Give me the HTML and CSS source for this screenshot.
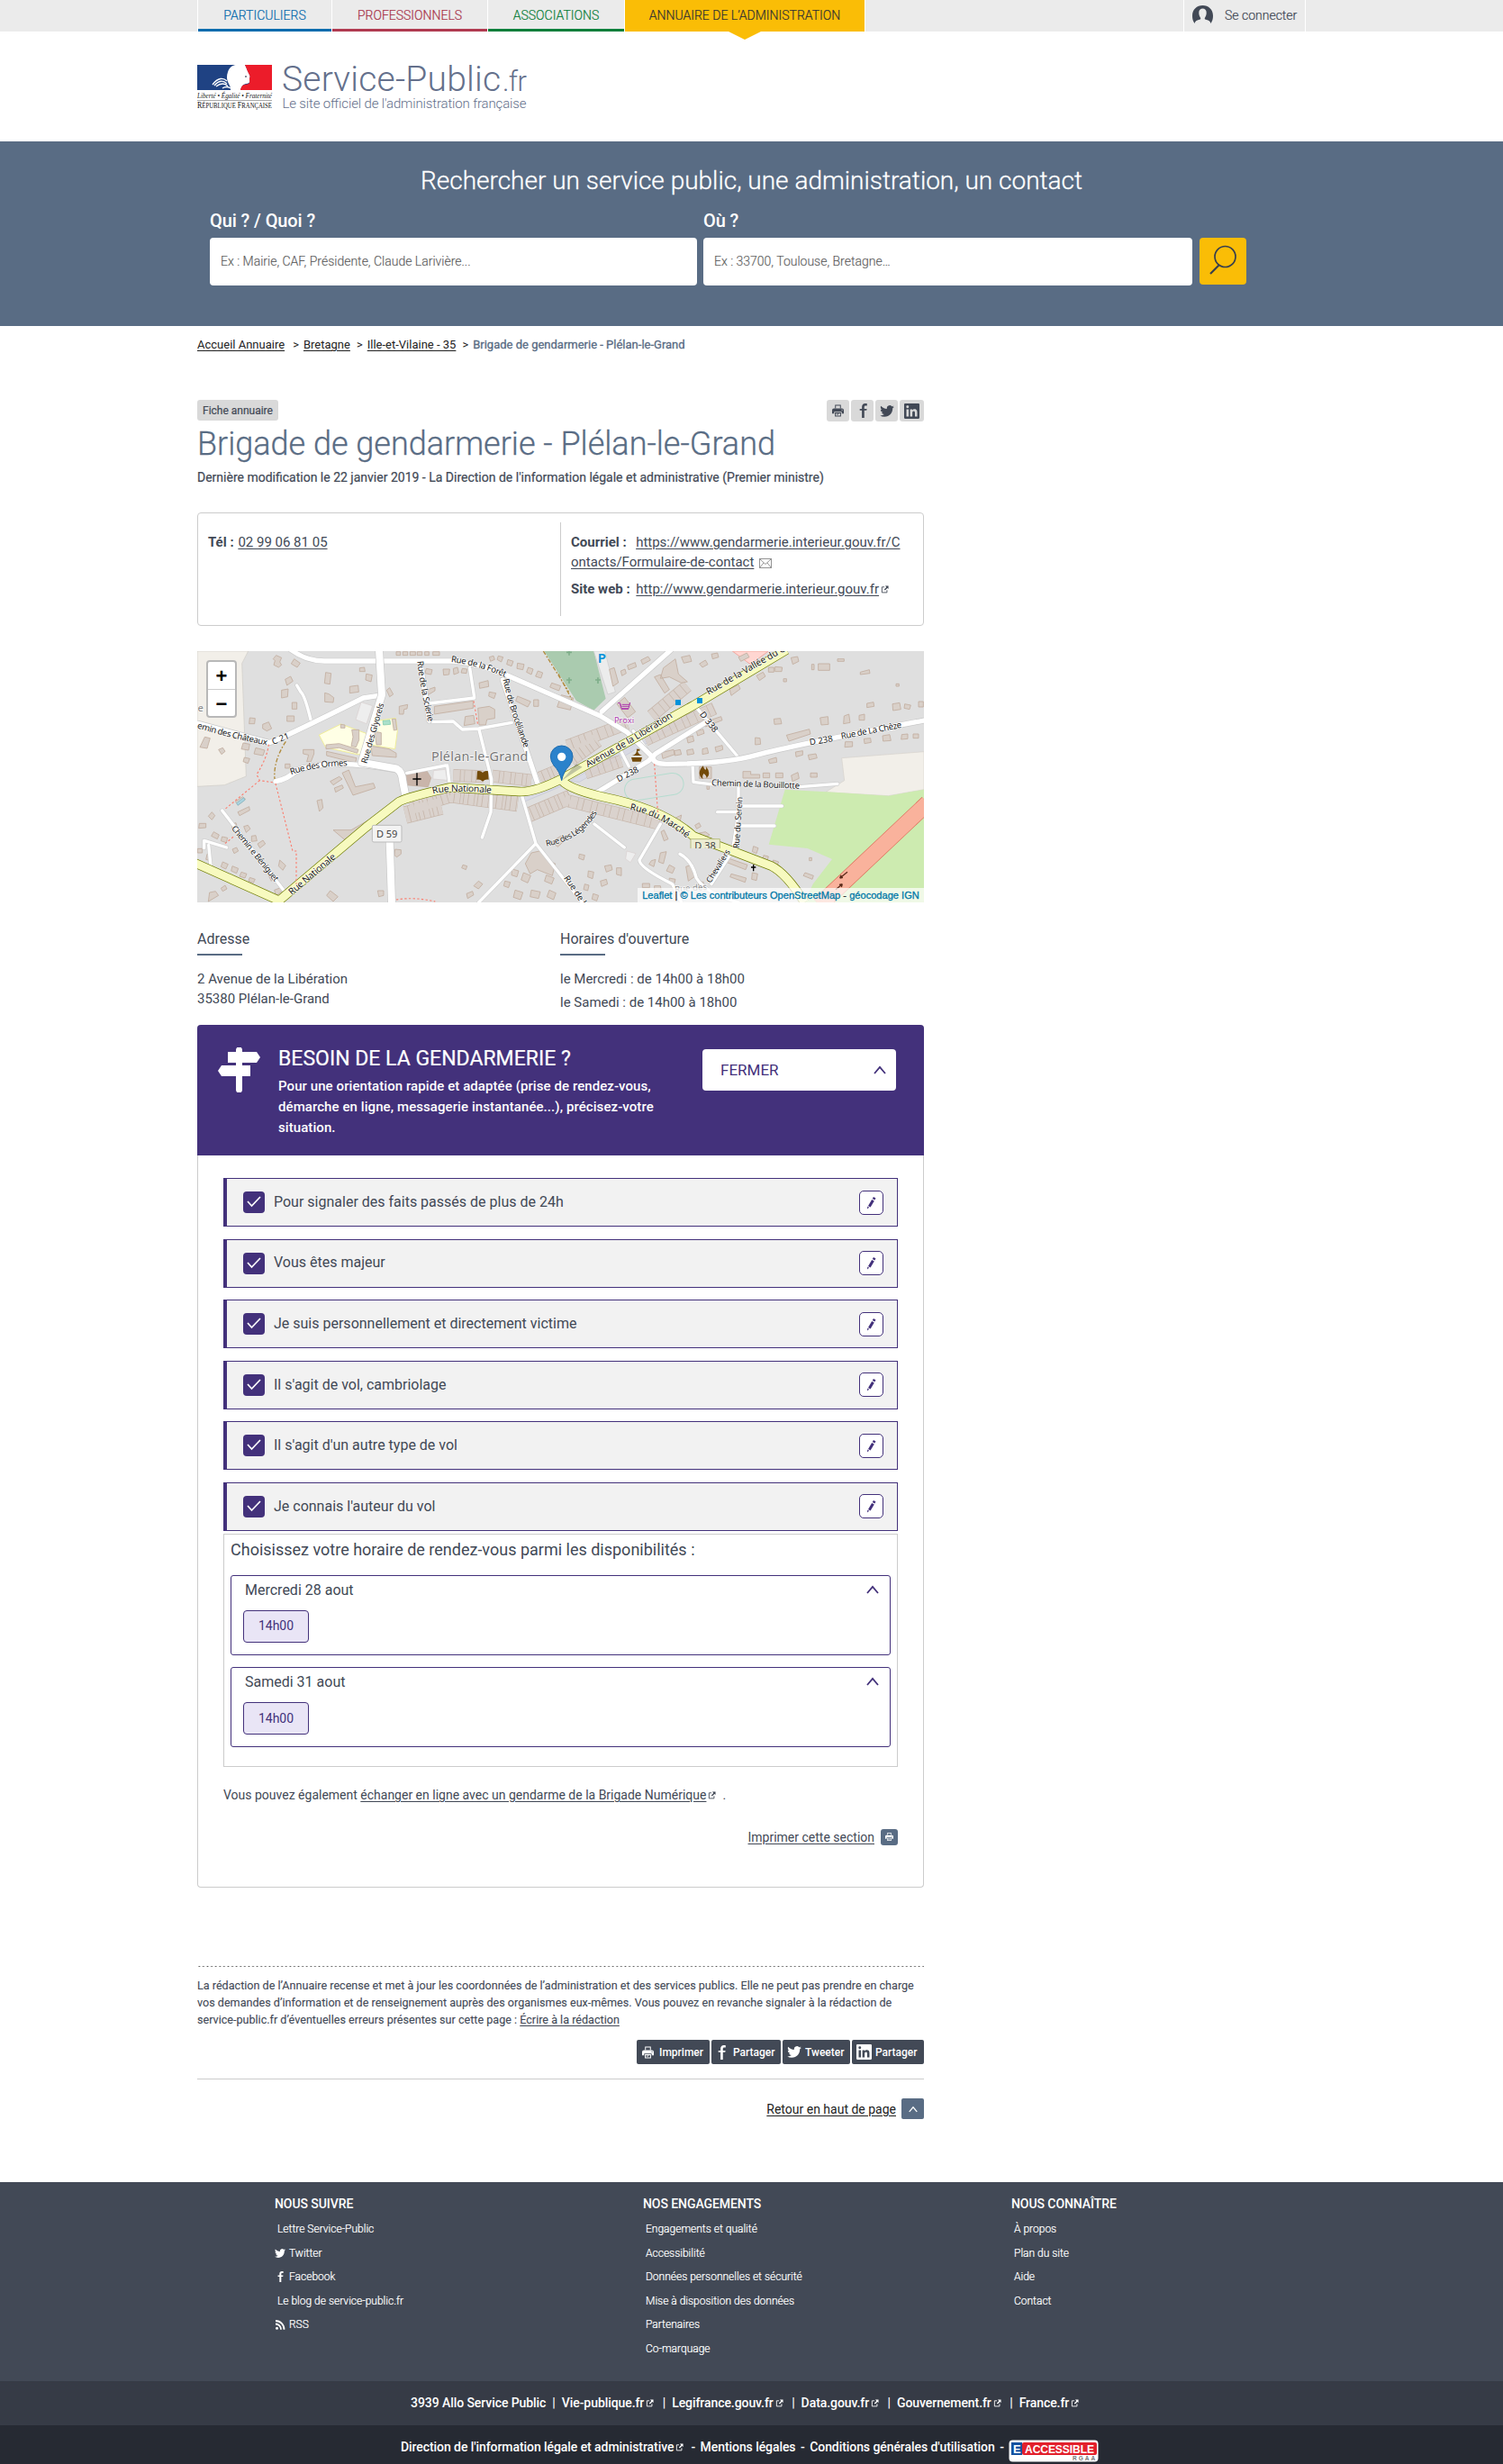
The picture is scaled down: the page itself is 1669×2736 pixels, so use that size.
FILE: index.html
```html
<!DOCTYPE html>
<html lang="fr">
<head>
<meta charset="utf-8">
<title>Brigade de gendarmerie - Plélan-le-Grand</title>
<link rel="stylesheet" href="styles.css">
</head>
<body>
<svg class="defs" width="0" height="0">
  <symbol id="print" viewBox="0 0 16 16"><path d="M4 0h8v4.500h-1.200V1.200H5.200V4.500H4zM2.500 5h11A2.500 2.500 0 0 1 16 7.500V12h-2.800V9.500H2.800V12H0V7.500A2.500 2.500 0 0 1 2.500 5zM13 6.500v1.300h1.300V6.500z" fill-rule="evenodd"/><path d="M3.800 10.500h8.400V16H3.800zM5 11.700v3.100h6v-3.100z" fill-rule="evenodd"/><path d="M5.800 12.300h4v.7h-4zM5.800 13.600h2.600v.7H5.800z"/></symbol>
  <symbol id="fb" viewBox="0 0 12 20"><path d="M12 .2v3h-1.900c-1.500 0-1.900.7-1.900 1.700v2.500h3.600l-.5 2.400H8.200V20H4.900V9.800h-3V7.400h3V4.700C4.900 1.700 6.700 0 9.400 0 10.700 0 12 .2 12 .2z"/></symbol>
  <symbol id="tw" viewBox="0 2 24 20"><path d="M23.954 4.569a10 10 0 0 1-2.825.775 4.958 4.958 0 0 0 2.163-2.723c-.951.555-2.005.959-3.127 1.184a4.920 4.920 0 0 0-8.384 4.482C7.691 8.094 4.066 6.130 1.640 3.161a4.822 4.822 0 0 0-.666 2.475c0 1.710.870 3.213 2.188 4.096a4.904 4.904 0 0 1-2.228-.616v.061a4.923 4.923 0 0 0 3.946 4.827 4.996 4.996 0 0 1-2.212.085 4.937 4.937 0 0 0 4.604 3.417 9.868 9.868 0 0 1-6.102 2.105c-.390 0-.779-.023-1.170-.067a13.995 13.995 0 0 0 7.557 2.209c9.054 0 13.999-7.496 13.999-13.986 0-.209 0-.420-.015-.630a9.936 9.936 0 0 0 2.460-2.548z"/></symbol>
  <symbol id="li" viewBox="0 0 24 24"><path d="M20.447 20.452h-3.554v-5.569c0-1.328-.027-3.037-1.852-3.037-1.853 0-2.136 1.445-2.136 2.939v5.667H9.351V9h3.414v1.561h.046c.477-.9 1.637-1.850 3.370-1.850 3.601 0 4.267 2.370 4.267 5.455v6.286zM5.337 7.433a2.062 2.062 0 0 1-2.063-2.065 2.064 2.064 0 1 1 2.063 2.065zm1.782 13.019H3.555V9h3.564v11.452zM22.225 0H1.771C.792 0 0 .774 0 1.729v20.542C0 23.227.792 24 1.771 24h20.451C23.200 24 24 23.227 24 22.271V1.729C24 .774 23.200 0 22.222 0z"/></symbol>
  <symbol id="ext" viewBox="0 0 10 10"><path d="M4.500 2H1.500v6.800H7.700V5.800" fill="none" stroke="currentColor"/><path d="M5.500.5H9.500v4L8.200 3.200 5.300 6.100 4.300 5.100 7 2.100z"/></symbol>
  <symbol id="check" viewBox="0 0 24 24"><path d="M5 11l4.500 5L19 6" fill="none" stroke="#fff" stroke-width="1.700"/></symbol>
  <symbol id="pen" viewBox="0 0 28 28"><path d="M16.800 6.700l2.800 1.700-1.300 2.300-2.900-1.700zM14.700 10l3 1.800-4.700 7.900-2.900-1.700zM9.300 18.600l2 1.200-2.300 2z"/></symbol>
  <symbol id="up" viewBox="0 0 14 10"><path d="M1 9l6-7 6 7" fill="none" stroke="currentColor" stroke-width="1.800"/></symbol>
</svg>

<header>
  <nav class="top"><div class="wrap topin">
    <a class="tab t1">PARTICULIERS</a><a class="tab t2">PROFESSIONNELS</a><a class="tab t3">ASSOCIATIONS</a><a class="tab t4">ANNUAIRE DE L’ADMINISTRATION</a>
    <a class="login"><svg width="23" height="20" viewBox="0 0 23 20"><path d="M2.500 20C.8 17.500 0 15 0 11.500 0 4.500 5 0 11.500 0S23 4.500 23 11.500c0 3.500-.8 6-2.500 8.500-.8-2.500-2.500-3.700-6.200-4.500-.6-.2-.7-.8-.4-1.400C15 12 15.700 10.500 15.700 8c0-2.800-1.700-4.500-4.200-4.500S7.300 5.200 7.300 8c0 2.500.7 4 1.800 6.100.3.600.2 1.200-.4 1.400C5 16.300 3.300 17.500 2.500 20z" fill="#424956"/></svg><span>Se connecter</span></a>
  </div></nav>
  <div class="wrap brand">
    <svg width="366" height="56" viewBox="0 0 366 56">
      <rect width="83" height="28" fill="#1f4283"/><path d="M34 8C36 2 40 0 44 0H53c2 4 3 7 5.500 12 .8 2-.8 2.500-.3 4.500.8 3-.5 4-4.200 4.500C50 22 49 25 48 28H37C38 24 33 20 33 14c0-2 .2-4 1-6z" fill="#fff"/><path d="M53 0H83V28H48c1-4 2-5.500 5-6 4-.5 6-1 5-5.500-.4-2 1-2.500.4-4.500C55.500 7 55 4 53 0z" fill="#ec1c2a"/>
      <path d="M17 22c6-8 12-8 16-4M19 23c5-6 10-6 14-2M21 24c5-4 9-4 13-.5M28 26c3-2 6-2 9 0" fill="none" stroke="#fff" stroke-width="1.300"/><circle cx="54" cy="13" r="1" fill="#667"/>
      <text class="lef" x="0" y="36.500" textLength="83" lengthAdjust="spacingAndGlyphs">Liberté • Égalité • Fraternité</text>
      <path d="M0 39.500H83" stroke="#aaa"/>
      <text class="rf" x="0" y="48" textLength="83" lengthAdjust="spacingAndGlyphs">R<tspan class="sc">ÉPUBLIQUE</tspan> F<tspan class="sc">RANÇAISE</tspan></text>
      <text class="sp" x="94" y="28.500" textLength="243">Service-Public</text><text class="spf" x="339" y="28.500" textLength="27">.fr</text>
      <text class="tag" x="94.500" y="48" textLength="271">Le site officiel de l'administration française</text>
    </svg>
  </div>
</header>

<section class="search">
  <h2>Rechercher un service public, une administration, un contact</h2>
  <div class="fields">
    <div class="field"><label>Qui ? / Quoi ?</label><div class="input">Ex : Mairie, CAF, Présidente, Claude Larivière...</div></div>
    <div class="field f2"><label>Où ?</label><div class="input">Ex : 33700, Toulouse, Bretagne…</div></div>
    <div class="go"><svg width="52" height="52" viewBox="0 0 52 52"><circle cx="28.500" cy="21" r="11.500" fill="none" stroke="#383f4d" stroke-width="1.700"/><path d="M22 30L12 40" stroke="#383f4d" stroke-width="2.200"/></svg></div>
  </div>
</section>

<main class="wrap">
  <nav class="crumb"><a>Accueil Annuaire</a><i class="first">&gt;</i><a>Bretagne</a><i>&gt;</i><a>Ille-et-Vilaine - 35</a><i>&gt;</i><b>Brigade de gendarmerie - Plélan-le-Grand</b></nav>
  <div class="content">
    <div class="meta"><span class="badge">Fiche annuaire</span>
      <div class="share"><span><svg width="13" height="14"><use href="#print"/></svg></span><span><svg width="10" height="16"><use href="#fb"/></svg></span><span><svg width="16" height="13"><use href="#tw"/></svg></span><span class="w"><svg width="17" height="17"><use href="#li"/></svg></span></div></div>
    <h1>Brigade de gendarmerie - Plélan-le-Grand</h1>
    <p class="mod">Dernière modification le 22 janvier 2019 - La Direction de l'information légale et administrative (Premier ministre)</p>

    <div class="contact">
      <div class="c1"><p><b>Tél : </b><a class="m1">02 99 06 81 05</a></p></div>
      <div class="c2"><p><b>Courriel : </b>&nbsp;<a class="m2">https://www.gendarmerie.interieur.gouv.fr/C</a><br><a>ontacts/Formulaire-de-contact</a> <svg class="mail" width="14" height="11" viewBox="0 0 14 11"><path d="M.5.500h13v10H.5zL7 6.500 13.500.5M.5 10.500L5 5M13.500 10.500L9 5" fill="none" stroke="#777" stroke-width=".8"/></svg></p>
      <p><b>Site web : </b><a class="m2">http://www.gendarmerie.interieur.gouv.fr</a><svg class="ext"><use href="#ext"/></svg></p></div>
    </div>

    <div class="map">
<svg width="807" height="279" viewBox="27 24 2421 837">
 <rect x="27" y="24" width="2421" height="837" fill="#dfdfdf"/>
 <path d="M27 24H197L176 65 190 441 118 470 27 475z" fill="#f2efe9" stroke="#cfcbc5" stroke-width="2"/>
 <path d="M433 303L506 267 595 300 625 256 688 247 694 290 686 350 610 337 600 370 560 368 455 345z" fill="#ffffe5" stroke="#f0ee9a" stroke-width="3"/>
 <path d="M1183 24H1348L1388 182 1348 221 1290 190z" fill="#aacbaf"/>
 <path d="M1348 24H1385L1420 160 1395 168z" fill="#ececec" stroke="#ccc" stroke-width="2"/>
 <path d="M2174 380L2448 359V485L2330 506 2120 494 2183 455z" fill="#f2efe9" stroke="#d6d2cc" stroke-width="2"/>
 <path d="M1985 485L2150 494 2330 506 2448 485V861H2050L2078 800 2142 717 2060 681 1931 668z" fill="#cdebb0"/>
 <path d="M1810 24H1930L1870 68z" fill="#ffd6d1" stroke="#f2a8a0" stroke-width="3"/>
 <path d="M1115 500L1250 440V470L1118 525zM1270 457L1680 215 1690 235 1300 460z" fill="#d9dae4" stroke="#c3c5d4" stroke-width="2"/>
 <!-- rows of terraced houses -->
 <g fill="none" opacity=".8">
  <g stroke="#c2ad9f">
   <path d="M735 540L870 500 1095 530M720 570L840 540" stroke-width="58"/>
   <path d="M880 438L980 442M1010 440L1140 455" stroke-width="42"/>
   <path d="M1130 570L1270 510M1270 385L1360 320M1170 450L1230 425" stroke-width="50"/>
   <path d="M1260 340L1460 265M1320 430L1440 390M1520 320L1750 215M1250 520L1570 600M1540 240L1660 140" stroke-width="42"/>
  </g>
  <g stroke="#d9d0c9">
   <path d="M735 540L870 500 1095 530M720 570L840 540" stroke-width="54" stroke-dasharray="13 2.500 18 2 9 2.500"/>
   <path d="M880 438L980 442M1010 440L1140 455" stroke-width="38" stroke-dasharray="22 2.500 12 2"/>
   <path d="M1130 570L1270 510M1270 385L1360 320M1170 450L1230 425" stroke-width="46" stroke-dasharray="11 2.500 19 2"/>
   <path d="M1260 340L1460 265M1320 430L1440 390M1520 320L1750 215M1250 520L1570 600M1540 240L1660 140" stroke-width="38" stroke-dasharray="17 2.500 25 2"/>
  </g>
 </g>
 <!-- detached buildings -->
 <g fill="#d9d0c9" stroke="#c2ad9f" stroke-width="2.500">
  <path d="M290 38l18 8-6 14 6 10-10 8-16-8 4-14-6-6zM350 50l20 14-10 14-20-12zM455 95l18 3-4 36-18-3zM535 142l28-4 2 22-30 4zM452 163l14 4 16 12-2 16-28-2zM568 80l16-2 2 14h-18zM590 100l20 4-4 22-18-6zM320 118l18-10 8 16-20 14zM308 154l22-4-2 26-20 4zM343 195h16v22h-16zM326 240h24v18h-24zM202 246l18 2-2 18h-18zM245 268l20-8 10 22-16 8-14-8zM180 330l22 4-4 20-24-4zM222 346l30 8-6 18-30-6zM184 378l18 4-6 16-16-6zM52 310l18 4-10 34-24-4zM98 352l14-6 8 12-12 10zM668 146l12 22-12 8-10-22zM700 208l28-6-2 14-10 2-2 16h-14zM785 156l34-12v12l-20 12h-14zM320 400h16v14h-16zM380 352h36v14l-10 26h-14l6-22-18-4z"/>
  <path d="M690 26h14v12h-14zM712 26h16v12h-16zM736 26h18v12h-18zM760 26h16v12h-16zM785 26h14v12h-14zM812 26h22v12h-22zM790 82l20 4-4 16-20-4zM846 84h22l-2 18-18 2zM880 82l14-4 4 18-16 6zM910 82l16 2-2 14-18-2zM817 208L946 190 946 214 817 234zM920 242l28-4 4 28-36 6zM962 214l38-6 18 10v30l-26 4-4 18h-22zM1000 44l14-4 4 12-14 6zM1030 40l16 4-6 16-14-8zM1062 52l18 6-6 16-16-6zM1094 64l22 4-4 18-20-4zM1130 78l16 6-6 18-16-8zM966 130l30-8 2 20-30 6zM1000 160l22 4-6 18-18-8zM1046 120l20 6-6 18-18-6zM1094 174l44 18-10 18-40-20zM1148 186h16v22h-16zM1162 90l16 6-6 18-18-6zM1208 130l30 10-6 16-30-12zM1240 170l40 10-10 40-44-10z"/>
  <path d="M505 268l14 2v10h-14zM542 286h24v34l-10 24-16-4 6-30zM618 292l22 4v40h-16zM456 336l44-4 64 20-4 12-60-18-44 4zM458 358l100 22-4 16-96-24zM606 340l60 10 24 14v14l-80-6zM676 250h12l4 36-10 2zM470 458l30-16 10 8-30 20zM484 480l26-10 4 10-26 14zM510 430l22-10 22 56 60-12 6 16-74 24zM480 620h60l80-46 8 12-70 44-26 34zM426 522l16-4 4 28-12 12zM162 560l38-18 2 12-34 18zM154 525l24-16 10 8-24 20zM64 574l12-14 10 12-10 14zM34 598h22v14l-24 2zM82 626l18 10-6 14-20-10zM110 642l18 4-4 16-18-6zM142 600l14-4 4 14-16 8zM182 608l14-4 8 12-14 12zM208 640l14-2 4 18-18 2zM228 666l18-12 8 12-18 14z"/>
  <path d="M112 726l18 8-8 16-16-8zM144 740l20 8-6 16-18-8zM174 760l18 6-6 14-18-6zM202 778l18 6-6 12-16-6zM28 682h16v14H28zM60 700l14 4-4 18-14-4zM144 684l14-6 6 12-14 8zM302 720l20 18-10 16-14-14zM264 770l16-6 8 12-14 14zM284 820l26-10 4 10-24 20zM106 814l14-10 6 12-14 8zM68 828l20-4 10 14-34 20zM470 822l26 20-16 16-22-20zM628 822h20v16l-16 4zM686 684l20 2v14l-14 10-8-6zM964 790l14 10-14 16-16-10zM912 736l14 4-4 12-14-6zM924 832l20-8 4 12-20 12zM1140 696l36-8 16 30 28 14-10 40-50-20-24 14-16-34zM1076 750l22 6-6 20-18-6zM1114 762l24 10-10 24-22-10zM1052 790l18 4-6 18-16-6zM1086 820l26 8-8 24-24-8zM1140 820l30 6-6 22-28-6zM1190 770l26 10-8 20-24-10zM1208 660l30-20 16 12-26 24zM1200 820l22 10-8 22-22-10z"/>
  <path d="M1438 90l14-6 4 14-14 8zM1460 72l26-10 4 14-26 10zM1505 54l24-12 8 12-26 14zM1400 85l16-6 14 50-18 12zM1580 80l40-30 10 50 30 26-20 4-40-20-30 5zM1550 110l20-8 30 50-16 12zM1425 200l26-22 36 48-26 20zM1640 44l28-6 6 20-26 6zM1700 66l20-12 8 14-18 10zM1740 34l20-4 4 14-20 6zM1830 44l28-14 8 14-28 14zM1890 106l22-12 8 14-20 14zM1930 78h18v16h-18zM1952 76l24 2-2 14h-22zM2005 46l22-4 4 16-20 10zM2074 68h8v18h-8zM2096 66h38v22h-38zM2160 50h22v8h-22zM2236 94l30-8 2 12-32 4zM1980 116h10v10h-10zM1800 150l30-14 6 14-30 22zM2355 133h10v8h-10zM2258 198l22-4 2 14-24 4zM2343 200l24-4 4 22-26 4zM2384 200l20 4-4 14-18-4zM2430 192h16v18h-16zM1948 250l22-2 4 18-24 2zM2102 246l26-4 2 26-24 2zM2182 240l16-6 4 28-22 4zM2232 238l18-4v20h-18z"/>
  <path d="M1990 304l76-20 4 16-72 24zM1886 312l16 2 2 20-18 2zM1658 312l20-6 4 18-20 6zM1690 290l22-6 4 14-22 8zM1712 262l60-20 4 12-56 22zM1574 362l40-10 4 16-40 14zM1616 356l20-4 4 16-22 4zM1658 354l20-4 4 16-22 4zM1710 350l16-4 4 18-20 4zM1752 344l24-6 2 14-22 8zM1930 386l26-8 2 16-24 4zM2020 360l24-4v14l-22 6zM2062 370l26-4 4 14-26 6zM2186 326h24v16l-26 2zM2248 316l22-2 2 14-22 4zM2310 306l24-4 4 20-26 2zM2374 302l20-2v16l-22 2zM2412 300h18v14h-18zM1845 425h26v10h30v12h-56zM1912 430h22v16h-22zM1954 430h24v16h-24zM2006 438l22-10 4 20-22 10zM2070 430h22v14h-22zM1700 410h40v38h-40zM1725 466h8v18h-8zM1685 604l14-8 6 12-14 8zM1700 630l20-4 14 10-14 8zM1620 580l20-10-10 50-14-6zM1582 620l14 30-14 6-10-30z"/>
  <path d="M1570 696l20-4-10 40-16-6zM1540 722l14-4-6 24-16-8zM1600 736l18 10-8 18-20-8zM1600 780l20 4-4 16-18-4zM1510 798h24v14h-24zM1550 806h20l4 20h-24zM1655 742l20-6 8 40-20 14zM1424 746h16v26l-16-4zM1700 790l14 4-4 14-14-4zM1796 714l64 22-6 16-62-24zM1806 766l50 14-4 14-50-18zM1880 674l16 6-6 18-14-6zM1914 704l16 4-4 14-16-4zM1946 720l18 6-6 14-16-4zM1876 762l18 4-4 22-16-4zM2052 762l28 10-4 12-30-12zM2066 712h8v10h-8zM1330 756l18 4-4 22-16-6zM1384 740l22-4 4 16-20 8zM1370 790l20-6 4 16-20 8zM1318 800l14 4-4 18-14-4zM1346 832l18 6-6 18-16-6zM1300 700l18 4-4 16-16-6z"/>
  <path d="M715 430L790 420 806 446 796 476 722 470z" fill="#c9b5aa"/>
 </g>
 <path d="M645 256l24-2 2 14-24 2z" fill="#aae0cb" stroke="#77c5a5" stroke-width="2"/><path d="M158 530l24-18 4 8-24 18z" fill="#aad3df" stroke="#7ab5c5" stroke-width="2"/>
 <path d="M573 194l38 12-20 60-36-14zM814 422l40-4 6 36-48-4zM1458 690l30 8-18 30-16-12z" fill="#eee" stroke="#d8cfcf" stroke-width="2"/>
 <rect x="1450" y="440" width="198" height="72" rx="36" transform="rotate(-9 1550 476)" fill="none" stroke="#b5dccf" stroke-width="3"/>
 <!-- streets -->
 <g fill="none" stroke-linecap="round" stroke-linejoin="round">
  <g stroke="#cfcfcf" stroke-width="14">
   <path d="M359 138L372 160Q385 170 405 252M800 198L950 180M810 260L880 258 910 285 965 282 1075 262M880 258L895 272M935 80L950 178M965 282L1007 450 1005 560 976 645M860 405L868 470M725 430L855 405M110 555L330 840M50 680V655L125 678M65 670L72 740M1677 400L1680 460 1760 470M2035 476L2160 466M1435 350L1465 408M1480 290L1545 380M1840 540H1975M1760 560H1830M1840 606H1950"/>
   <path d="M1107 500L1155 665 965 861M1155 665L1310 861M1350 600L1450 678M1570 600L1500 720Q1500 745 1610 800L1640 861M1635 700Q1675 720 1690 780 1720 830 1830 861M1830 480V560L1810 690 1740 800M1680 200L1830 378"/>
  </g>
  <g stroke="#fff" stroke-width="10">
   <path d="M359 138L372 160Q385 170 405 252M800 198L950 180M810 260L880 258 910 285 965 282 1075 262M880 258L895 272M935 80L950 178M965 282L1007 450 1005 560 976 645M860 405L868 470M725 430L855 405M110 555L330 840M50 680V655L125 678M65 670L72 740M1677 400L1680 460 1760 470M2035 476L2160 466M1435 350L1465 408M1480 290L1545 380M1840 540H1975M1760 560H1830M1840 606H1950"/>
   <path d="M1107 500L1155 665 965 861M1155 665L1310 861M1350 600L1450 678M1570 600L1500 720Q1500 745 1610 800L1640 861M1635 700Q1675 720 1690 780 1720 830 1830 861M1830 480V560L1810 690 1740 800M1680 200L1830 378"/>
  </g>
  <path d="M340 20Q390 57 450 57H870Q960 60 1060 105L1370 240 1460 295 1545 378M1045 120L1162 468M770 60L800 255M270 328Q320 310 580 180L632 172M288 458Q330 450 360 420 480 380 690 420M1375 225L1605 20M1350 500L1530 390 1555 365 1720 262M1545 378Q1545 400 1590 400 1780 400 1890 370T2448 255M30 265L265 328" stroke="#c9c9c9" stroke-width="20"/>
  <path d="M340 20Q390 57 450 57H870Q960 60 1060 105L1370 240 1460 295 1545 378M1045 120L1162 468M770 60L800 255M270 328Q320 310 580 180L632 172M288 458Q330 450 360 420 480 380 690 420M1375 225L1605 20M1350 500L1530 390 1555 365 1720 262M1545 378Q1545 400 1590 400 1780 400 1890 370T2448 255M30 265L265 328" stroke="#fff" stroke-width="16"/>
  <path d="M633 20L642 170 575 395 690 415Q710 425 712 460L722 510M668 655L675 861" stroke="#c9c9c9" stroke-width="28"/>
  <path d="M633 20L642 170 575 395 690 415Q710 425 712 460L722 510M668 655L675 861" stroke="#fff" stroke-width="24"/>
  <g stroke-linecap="butt">
   <path d="M20 730L300 855 590 610 700 525Q730 510 870 478L1100 492Q1150 495 1240 450L1680 205 1990 20M1240 450Q1250 480 1380 510 1580 550 1680 640L1940 740Q1990 765 2050 861" stroke="#707d05" stroke-width="31"/>
   <path d="M20 730L300 855 590 610 700 525Q730 510 870 478L1100 492Q1150 495 1240 450L1680 205 1990 20M1240 450Q1250 480 1380 510 1580 550 1680 640L1940 740Q1990 765 2050 861" stroke="#f7fabf" stroke-width="27"/>
   <path d="M2100 870L2460 530" stroke="#dc6a57" stroke-width="55"/><path d="M2100 870L2460 530" stroke="#f9b29c" stroke-width="51"/>
  </g>
  <g stroke="#fa8072" stroke-width="3.500" stroke-dasharray="7 7" stroke-linecap="butt"><path d="M265 335Q260 380 225 435L235 455 285 462M235 455L120 550M288 465L345 690 357 690 357 800M120 665L150 640M948 190L962 270M1550 400L1562 570M690 852Q750 842 820 858"/></g>
  <path d="M322 325Q280 390 285 450M1180 24L1265 160M1230 100L1275 185" stroke="#b08b3c" stroke-width="4" stroke-dasharray="14 6 5 6" stroke-linecap="butt"/>
 </g>
 <path d="M1266 112v20M1257 120h18M1362 112v20M1353 120h18M1266 20v18M1257 28h18" stroke="#7fae8a" stroke-width="5"/>
 <path d="M745 450h28M759 430v42M1872 744h16M1880 735v22" stroke="#000" stroke-width="4"/>
 <path d="M960 424q12-3 18 5 6-8 18-5l2 28q-12-2-20 6-8-8-20-6zM1473 378h36l-4 14h-28zM1476 372q14-4 15-16v-6h10v6h-7q2 12 15 16zM1700 430q0-10 12-24 2 8 8 14 4-4 2-12 16 20 6 34l-4 6q0-10-10-16-6 8-2 18-12-6-12-20z" fill="#734a08"/>
 <path d="M1428 197h8l4 18h24l5-20M1436 200l3 12M1442 202h26M1441 208h26M1440 217h24" fill="none" stroke="#ac39ac" stroke-width="3"/>
 <path d="M1620 186h18v18h-18zM1692 180h18v18h-18z" fill="#0092da"/>
 <path d="M2168 780l25-20M2168 780l10-2M2168 780l4-10M2154 818l22-18M2176 800l-3 10M2176 800l-10 2" stroke="#5a2a1a" stroke-width="4" fill="none"/>
 <g class="ml" text-anchor="middle" font-size="29">
  <defs>
   <path id="p1" d="M872 60Q960 70 1060 114"/><path id="p2" d="M760 58Q770 150 800 275"/><path id="p3" d="M1046 118Q1060 200 1124 368"/><path id="p4" d="M26 280Q120 310 266 339"/><path id="p5" d="M340 436Q430 405 532 406"/><path id="p6" d="M813 500Q860 484 1016 498"/><path id="p7" d="M1328 412Q1480 330 1622 237"/><path id="p8" d="M1730 170L2030 -2"/><path id="p9" d="M1468 553Q1570 570 1668 656"/><path id="p10" d="M140 615L296 807"/><path id="p11" d="M342 838L498 706"/><path id="p12" d="M592 400L654 183"/><path id="p13" d="M1190 674Q1330 650 1378 522"/>
  </defs>
  <text text-anchor="start"><textPath href="#p1" textLength="188">Rue de la Forêt</textPath></text>
  <text text-anchor="start"><textPath href="#p2" textLength="205">Rue de la Scierie</textPath></text>
  <text text-anchor="start"><textPath href="#p3" textLength="240">Rue de Brocéliande</textPath></text>
  <text text-anchor="start"><textPath href="#p4" textLength="240">emin des Châteaux</textPath></text>
  <text text-anchor="start"><textPath href="#p5" textLength="190">Rue des Ormes</textPath></text>
  <text text-anchor="start" font-size="31"><textPath href="#p6" textLength="195">Rue Nationale</textPath></text>
  <text text-anchor="start" font-size="31"><textPath href="#p7" textLength="330">Avenue de la Libération</textPath></text>
  <text text-anchor="start" font-size="31"><textPath href="#p8" textLength="300">Rue de la Vallée du G</textPath></text>
  <text text-anchor="start" font-size="31"><textPath href="#p9" textLength="214">Rue du Marché</textPath></text>
  <text text-anchor="start" font-size="28"><textPath href="#p10" textLength="230">Chemin e Béniguet</textPath></text>
  <text text-anchor="start" font-size="31"><textPath href="#p11" textLength="194">Rue Nationale</textPath></text>
  <text text-anchor="start" font-size="28"><textPath href="#p12" textLength="208">Rue des Glyorels</textPath></text>
  <text text-anchor="start" font-size="28"><textPath href="#p13" textLength="210">Rue des Légendes</textPath></text>
  <text transform="translate(308 325) rotate(-22)">C 21</text>
  <text transform="translate(1724 266) rotate(52)">D 338</text>
  <text transform="translate(1465 443) rotate(-27)">D 238</text>
  <text transform="translate(2107 331) rotate(-10)">D 238</text>
  <text transform="translate(2274 298) rotate(-11)" textLength="205">Rue de La Chèze</text>
  <text transform="translate(1887 477) rotate(2)" textLength="294">Chemin de la Bouillotte</text>
  <text transform="translate(1838 596) rotate(-86)" font-size="28" textLength="172">Rue du Serein</text>
  <text transform="translate(1770 745) rotate(-58)" font-size="27" textLength="125">Chevaliers</text>
  <text transform="translate(1672 823) rotate(-5)" fill="#888">Rue des</text>
  <text transform="translate(1278 825) rotate(56)">Rue de l</text>
  <text x="38" y="224" font-size="34" fill="#888">e</text>
  <text x="968" y="391" font-size="43" fill="#777" textLength="322">Plélan-le-Grand</text>
  <text x="1449" y="264" font-size="28" fill="#ac39ac">Proxi</text>
  <text x="1375" y="63" font-size="45" font-weight="600" fill="#0092da" stroke="none">P</text>
 </g>
 <rect x="610" y="604" width="98" height="56" rx="5" fill="#f3f3f3" stroke="#bbb" stroke-width="3"/><text x="659" y="644" class="sh">D 59</text>
 <path d="M1671 681V650h97v31" fill="#ececd2" stroke="#b8bd80" stroke-width="3"/><text x="1719" y="684" class="sh" clip-path="url(#cut)">D 38</text><clipPath id="cut"><rect x="1660" y="640" width="120" height="41"/></clipPath>
 <path d="M1241 455L1310 410 1290 400z" opacity=".3"/>
 <path d="M1241 455Q1235 425 1215 405 1204 390 1204 375A37 36 0 0 1 1278 375Q1278 390 1267 405 1247 425 1241 455z" fill="#2b82cb" stroke="#1f6cae" stroke-width="3"/><circle cx="1241" cy="376" r="14" fill="#fff"/>
</svg>
      <div class="zoom"><span>+</span><span>−</span></div>
      <div class="attr"><a>Leaflet</a> | <a>© Les contributeurs OpenStreetMap</a> - <a>géocodage IGN</a></div>
    </div>

    <div class="cols">
      <div><h3>Adresse</h3><p>2 Avenue de la Libération<br>35380 Plélan-le-Grand</p></div>
      <div><h3>Horaires d'ouverture</h3><p>le Mercredi : de 14h00 à 18h00</p><p class="s">le Samedi : de 14h00 à 18h00</p></div>
    </div>

    <section class="need">
      <div class="head">
        <svg width="47" height="50" viewBox="0 0 47 50" fill="#fff"><path d="M20 5V3a3.500 3.500 0 0 1 7 0v2h16l4 6-4 6H27v3h9v12H27v15a3 3 0 0 1-7 0V32H4l-4-6 4-6h16v-3h-9V5z"/></svg>
        <div class="ht"><h2>BESOIN DE LA GENDARMERIE ?</h2><p>Pour une orientation rapide et adaptée (prise de rendez-vous,<br>démarche en ligne, messagerie instantanée...), précisez-votre<br>situation.</p></div>
        <div class="close"><span>FERMER</span><svg width="14" height="10"><use href="#up"/></svg></div>
      </div>
      <div class="body">
        <div class="item"><i><svg><use href="#check"/></svg></i><span>Pour signaler des faits passés de plus de 24h</span><em><svg><use href="#pen"/></svg></em></div>
        <div class="item"><i><svg><use href="#check"/></svg></i><span>Vous êtes majeur</span><em><svg><use href="#pen"/></svg></em></div>
        <div class="item"><i><svg><use href="#check"/></svg></i><span>Je suis personnellement et directement victime</span><em><svg><use href="#pen"/></svg></em></div>
        <div class="item"><i><svg><use href="#check"/></svg></i><span>Il s'agit de vol, cambriolage</span><em><svg><use href="#pen"/></svg></em></div>
        <div class="item"><i><svg><use href="#check"/></svg></i><span>Il s'agit d'un autre type de vol</span><em><svg><use href="#pen"/></svg></em></div>
        <div class="item"><i><svg><use href="#check"/></svg></i><span>Je connais l'auteur du vol</span><em><svg><use href="#pen"/></svg></em></div>
        <div class="slots"><h4>Choisissez votre horaire de rendez-vous parmi les disponibilités :</h4>
          <div class="day"><div class="dh"><span>Mercredi 28 aout</span><svg width="14" height="10"><use href="#up"/></svg></div><button>14h00</button></div>
          <div class="day"><div class="dh"><span>Samedi 31 aout</span><svg width="14" height="10"><use href="#up"/></svg></div><button>14h00</button></div>
        </div>
        <p class="also">Vous pouvez également <a>échanger en ligne avec un gendarme de la Brigade Numérique</a><svg class="ext"><use href="#ext"/></svg> &nbsp;.</p>
        <div class="psec"><a>Imprimer cette section</a><span><svg width="9" height="9"><use href="#print"/></svg></span></div>
      </div>
    </section>

    <p class="note">La rédaction de l’Annuaire recense et met à jour les coordonnées de l’administration et des services publics. Elle ne peut pas prendre en charge<br>vos demandes d’information et de renseignement auprès des organismes eux-mêmes. Vous pouvez en revanche signaler à la rédaction de<br>service-public.fr d’éventuelles erreurs présentes sur cette page : <a>Écrire à la rédaction</a></p>
    <div class="btns"><span class="b1"><svg width="13" height="14"><use href="#print"/></svg><u>Imprimer</u></span><span class="b2"><svg width="10" height="16"><use href="#fb"/></svg><u>Partager</u></span><span class="b3"><svg width="16" height="13"><use href="#tw"/></svg><u>Tweeter</u></span><span class="b4"><svg width="17" height="17"><use href="#li"/></svg><u>Partager</u></span></div>
    <div class="back"><a>Retour en haut de page</a><span><svg width="10" height="8"><use href="#up"/></svg></span></div>
  </div>
</main>

<footer>
  <div class="f1">
    <div><h5>NOUS SUIVRE</h5><p>Lettre Service-Public</p><p class="ic"><svg width="12" height="10"><use href="#tw"/></svg>Twitter</p><p class="ic"><svg width="12" height="12"><use href="#fb"/></svg>Facebook</p><p>Le blog de service-public.fr</p><p class="ic"><svg width="12" height="11" viewBox="0 0 11 11"><circle cx="2" cy="9.300" r="1.500" fill="#fff"/><path d="M.5 4.500a6 6 0 0 1 6 6.300M.5 1a9.500 9.500 0 0 1 9.500 9.800" fill="none" stroke="#fff" stroke-width="1.800"/></svg>RSS</p></div>
    <div><h5>NOS ENGAGEMENTS</h5><p>Engagements et qualité</p><p>Accessibilité</p><p>Données personnelles et sécurité</p><p>Mise à disposition des données</p><p>Partenaires</p><p>Co-marquage</p></div>
    <div><h5>NOUS CONNAÎTRE</h5><p>À propos</p><p>Plan du site</p><p>Aide</p><p>Contact</p></div>
  </div>
  <div class="f2r"><span>3939 Allo Service Public</span><i>|</i><span>Vie-publique.fr<svg class="ext"><use href="#ext"/></svg></span><i>|</i><span>Legifrance.gouv.fr<svg class="ext"><use href="#ext"/></svg></span><i>|</i><span>Data.gouv.fr<svg class="ext"><use href="#ext"/></svg></span><i>|</i><span>Gouvernement.fr<svg class="ext"><use href="#ext"/></svg></span><i>|</i><span>France.fr<svg class="ext"><use href="#ext"/></svg></span></div>
  <div class="f3"><span>Direction de l'information légale et administrative<svg class="ext"><use href="#ext"/></svg></span><i>-</i><span>Mentions légales</span><i>-</i><span>Conditions générales d'utilisation</span><i>-</i>
    <svg class="acc" width="100" height="25" viewBox="0 0 100 25"><rect x=".5" y=".5" width="99" height="24" rx="4" fill="#fff"/><rect x="3" y="3" width="12" height="14" fill="#1552a0"/><rect x="15" y="3" width="83" height="14" rx="2" fill="#e2202c"/><text x="5" y="14.500" class="at">E</text><text x="18" y="14.500" class="at" textLength="77" lengthAdjust="spacingAndGlyphs">ACCESSIBLE</text><text x="71" y="23.300" class="ar" textLength="25">RGAA</text></svg></div>
</footer>
</body>
</html>
```
FILE: styles.css
```css
*{box-sizing:border-box}
body{margin:0;font-family:Roboto,"Liberation Sans",sans-serif;color:#424956;font-size:15px;background:#fff}
h1,h2,h3,h4,h5,p{margin:0;font-weight:400}
i,em{font-style:normal}
svg{display:block;flex:none;fill:currentColor}
.defs{position:absolute}
.wrap{width:1231px;margin-left:219px}
a{text-decoration:underline;text-underline-offset:2px}
.top{height:35px;background:#ebebeb}
.topin{display:flex;border-left:1px solid #fff;height:35px}
.tab{height:35px;border-right:1px solid #fff;text-align:center;font-size:14px;font-weight:300;-webkit-text-stroke:.2px;line-height:34px;text-decoration:none;position:relative;white-space:nowrap}
.t1{width:149px;color:#0a6cae;background:linear-gradient(#0a6cae,#0a6cae) 0 100%/100% 3px no-repeat}
.t2{width:173px;color:#a9364c;background:linear-gradient(#b03a50,#b03a50) 0 100%/100% 3px no-repeat}
.t3{width:152px;color:#0c7f3b;background:linear-gradient(#0c7f3b,#0c7f3b) 0 100%/100% 3px no-repeat}
.t4{width:267px;color:#333;background:#fabd06;background-clip:padding-box}
.t4::after{content:"";position:absolute;left:115px;top:35px;border:18px solid transparent;border-top:9px solid #fabd06;border-bottom:0}
.login{margin-left:353px;width:136px;border:solid #fff;border-width:0 1px;display:flex;align-items:center;padding:0 0 2px 9px;text-decoration:none;font-size:14px;font-weight:300;-webkit-text-stroke:.2px;white-space:nowrap}
.login svg{margin-top:-2px}
.login span{margin-left:13px}
.brand{height:122px;padding-top:37px}
.lef{font:italic 8.500px "Liberation Serif",serif;fill:#222}
.rf{font:9.500px "Liberation Serif",serif;fill:#111}
.sc{font-size:8px}
.sp{font-size:39px;font-weight:300;fill:#64708c}
.spf{font-size:31px;font-weight:300;fill:#64708c}
.tag{font-size:15px;font-weight:300;fill:#64708c}
.search{height:205px;background:#596c84;color:#fff;padding-top:25px}
.search h2{font-size:28px;font-weight:300;-webkit-text-stroke:.3px;line-height:38px;text-align:center}
.fields{display:flex;margin-left:233px;margin-top:13px}
.field{width:541px;margin-right:7px}
.f2{width:543px;margin-right:8px}
.field label{display:block;font-size:20px;line-height:24px;font-weight:500;letter-spacing:-.1px;margin-bottom:7px}
.input{height:53px;background:#fff;border-radius:4px;color:#606060;font-size:14px;font-weight:300;-webkit-text-stroke:.15px;line-height:53px;padding-left:12px}
.go{margin-top:31px;height:52px;width:52px;background:#fabd06;border-radius:4px}
.crumb{display:flex;height:42px;font-size:13px;line-height:41px;color:#222}
.crumb i{padding:0 5px 0 7px}
.crumb .first{padding:0 5px 0 9px}
.crumb b{font-weight:400;-webkit-text-stroke:.3px;color:#596c84}
.content{width:807px}
.meta{display:flex;justify-content:space-between;margin-top:40px;height:24px}
.badge{height:23px;background:#d9d9d9;border-radius:3px;font-size:12px;line-height:24px;padding:0 6px;-webkit-text-stroke:.2px}
.share{display:flex;gap:2px}
.share span{width:25px;height:24px;background:#d9d9d9;border-radius:3px;display:flex;align-items:center;justify-content:center}
.share .w{width:27px}
h1{font-size:36px;font-weight:300;line-height:44px;color:#596c84;margin-top:3px;white-space:nowrap;-webkit-text-stroke:.3px}
.mod{font-size:14px;line-height:20px;margin-top:5px;white-space:nowrap;-webkit-text-stroke:.2px}
.contact{margin-top:29px;height:126px;border:1px solid #ccc;border-radius:4px;display:flex;padding:10px 11px;font-size:15px;line-height:22px}
.contact b{font-weight:700}
.c1{width:391px;padding-top:11px}
.c2{height:104px;border-left:1px solid #ccc;padding:11px 0 0 11px;white-space:nowrap}
.c2 p{margin-bottom:8px}
.m1{margin-left:1px}
.m2{margin-left:3px}
.mail,.ext{display:inline-block}
.mail{vertical-align:-2px;margin-left:2px}
.ext{width:9px;height:9px;margin-left:2px;vertical-align:0}
.map{margin-top:28px;height:279px;position:relative;overflow:hidden}
.ml{font-family:"Noto Sans",sans-serif;fill:#222;stroke:#fff;stroke-width:4;paint-order:stroke;stroke-opacity:.8}
.sh{font:33px "Noto Sans",sans-serif;fill:#444;text-anchor:middle}
.zoom{position:absolute;left:10px;top:10px;width:34px;height:64px;border:2px solid #b8b8b8;border-radius:4px;background:#fff;display:flex;flex-direction:column}
.zoom span{height:30px;font:bold 22px/31px "Liberation Sans",sans-serif;color:#000;text-align:center}
.zoom span+span{border-top:1px solid #ccc}
.attr{position:absolute;right:0;bottom:0;width:318px;height:16px;background:rgba(255,255,255,.7);font:11.100px/16px "Liberation Sans",sans-serif;color:#333;text-align:center;-webkit-text-stroke:.3px;white-space:nowrap}
.attr a{color:#0078a8;text-decoration:none}
.cols{display:flex;height:136px;padding-top:32px}
.cols>div{width:403px}
.cols h3{font-size:16px;line-height:18px;padding-bottom:9px;margin-bottom:15px;background:linear-gradient(#596c84,#596c84) 0 100%/50px 2px no-repeat}
.cols p{font-size:15px;line-height:22px}
.cols .s{margin-top:4px}
.need{border:1px solid #ccc;border-top:0;border-radius:4px;height:958px}
.head{margin:0 -1px;height:145px;background:#43317b;border-radius:4px 4px 0 0;color:#fff;display:flex;padding:25px 0 0 23px}
.ht{margin-left:20px;width:471px;white-space:nowrap}
.ht h2{font-size:23px;line-height:26px;-webkit-text-stroke:.2px}
.ht p{font-size:15px;font-weight:500;letter-spacing:.08px;line-height:23px;margin-top:6px}
.close{margin-top:2px;width:215px;height:46px;background:#fff;border-radius:4px;color:#43317b;display:flex;justify-content:space-between;align-items:center;padding:0 11px 1px 20px;font-size:17px}
.body{padding:25px 28px 0}
.item{height:54px;margin-bottom:13.600px;border:1px solid #43317b;border-left-width:4px;background:#f2f2f2;display:flex;align-items:center;padding:0 15px 0 18px;font-size:16px}
.item i{width:24px;height:24px;background:#43317b;border-radius:4px;margin-right:10px}
.item i svg{width:24px;height:24px}
.item span{flex:1;padding-bottom:1.500px}
.item em{width:27px;height:27px;border:1px solid #43317b;border-radius:5px;background:#fff;color:#43317b}
.item em svg{width:25px;height:25px}
.slots{margin-top:-10.600px;height:259px;border:1px solid #ccc;padding:0 7px}
.slots h4{font-size:18px;line-height:24px;padding-top:5px;height:45px;white-space:nowrap}
.day{height:89px;border:1px solid #43317b;border-radius:3px;margin-bottom:13.500px;padding:0 12px 0 13px}
.dh{display:flex;justify-content:space-between;font-size:16px;line-height:32px;color:#424956;padding-left:2px}
.dh svg{color:#43317b;margin-top:10px}
.day button{display:block;width:73px;height:36px;margin-top:6px;border:1px solid #43317b;border-radius:4px;background:#e9e5f6;color:#43317b;font:14px Roboto,sans-serif;padding:0 0 1px}
.also{font-size:14px;line-height:20px;margin-top:21px;white-space:nowrap}
.psec{display:flex;justify-content:flex-end;align-items:center;font-size:14px;margin-top:28px;gap:7px}
.psec span{width:19px;height:18px;background:#596c84;border-radius:3px;color:#fff;display:flex;align-items:center;justify-content:center}
.note{margin-top:86px;background:radial-gradient(circle,#555 .8px,transparent 1px) 0 0/4.600px 3px repeat-x;padding-top:13px;font-size:12.600px;line-height:19px;white-space:nowrap;-webkit-text-stroke:.1px}
.btns{display:flex;justify-content:flex-end;gap:2px;margin-top:13px;height:44px;border-bottom:1px solid #ccc}
.btns span{height:27px;background:#424956;border-radius:2px;color:#fff;display:flex;align-items:center;font-size:12px;font-weight:500;padding-left:6px;white-space:nowrap}
.btns u{text-decoration:none;margin-left:6px}
.b1{width:81px}.b2{width:77px}.b3{width:75px}.b4{width:80px}
.btns .b2 u{margin-left:8px}
.btns .b3,.btns .b4{padding-left:5px}
.btns .b3 u,.btns .b4 u{margin-left:4px}
.back{display:flex;justify-content:flex-end;align-items:center;font-size:14px;color:#222;margin-top:21px;height:23px;gap:6px;margin-bottom:70px}
.back span{width:25px;height:23px;background:#596c84;color:#fff;border-radius:2px;display:flex;align-items:center;justify-content:center}
footer{color:#fff}
.f1{height:221px;background:#424956;padding:13px 0 0 305px;display:flex}
.f1>div{width:409px}
.f1 h5{font-size:14px;font-weight:500;letter-spacing:-.07px;line-height:18px;margin-bottom:6px;padding-top:2px}
.f1 p{font-size:12px;font-weight:300;-webkit-text-stroke:.2px;line-height:26.500px;padding-left:3px}
.f1 .ic{display:flex;align-items:center;gap:4px;padding-left:0}
.f2r,.f3{display:flex;font-size:14px;font-weight:500;letter-spacing:-.07px;white-space:nowrap}
.f2r{background:#363b46;height:49px;line-height:48px;padding-left:456px}
.f2r i{margin:0 7px}
.f2r .ext,.f3 .ext{margin-right:2.500px}
.f3{background:#262a33;height:43px;line-height:48px;padding-left:445px}
.f3 i{margin:0 5.500px}
.acc{margin-top:16px}
.at{font:bold 13px "Liberation Sans",sans-serif;fill:#fff}
.ar{font:bold 6.500px "Liberation Sans",sans-serif;fill:#777}
```
